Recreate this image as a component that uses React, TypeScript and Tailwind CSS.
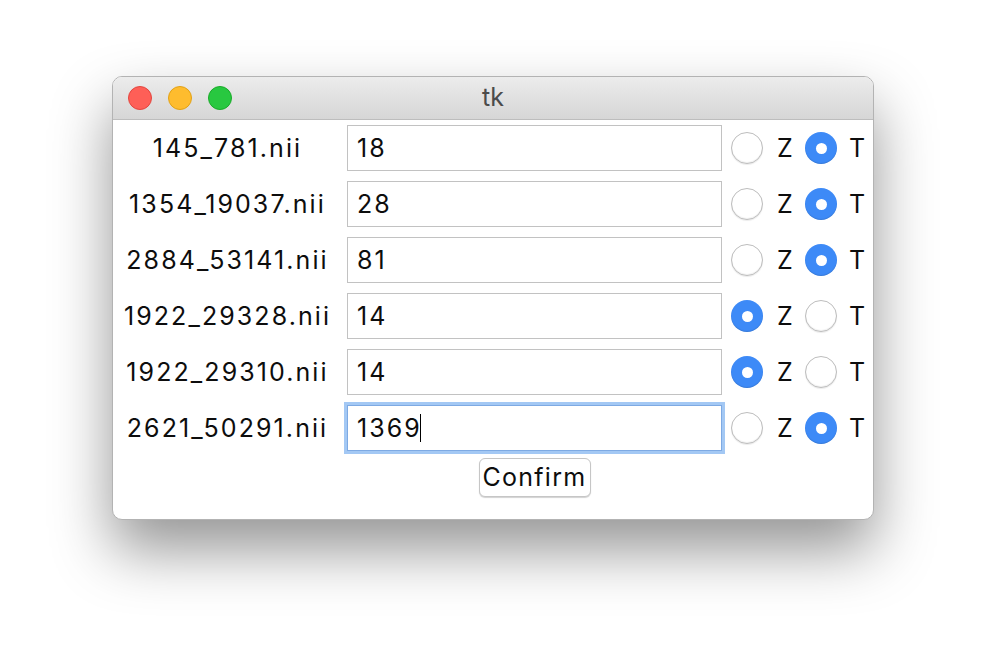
import React from "react";

type Row = { name: string; value: string; mode: "Z" | "T"; focused?: boolean };

const rows: Row[] = [
  { name: "145_781.nii", value: "18", mode: "T" },
  { name: "1354_19037.nii", value: "28", mode: "T" },
  { name: "2884_53141.nii", value: "81", mode: "T" },
  { name: "1922_29328.nii", value: "14", mode: "Z" },
  { name: "1922_29310.nii", value: "14", mode: "Z" },
  { name: "2621_50291.nii", value: "1369", mode: "T", focused: true },
];

function Radio({ checked }: { checked: boolean }) {
  if (checked) {
    return (
      <div className="w-[32px] h-[32px] rounded-full bg-[#3d8af7] flex items-center justify-center shadow-[inset_0_-1px_1px_rgba(0,0,0,0.12)]">
        <div className="w-[11px] h-[11px] rounded-full bg-white" />
      </div>
    );
  }
  return (
    <div className="w-[32px] h-[32px] rounded-full bg-white border border-[#bdbdbd] shadow-[inset_0_-1px_1px_rgba(0,0,0,0.06),0_1px_1px_rgba(0,0,0,0.08)]" />
  );
}

export default function App() {
  return (
    <div className="w-[986px] h-[668px] bg-white pt-[76px] pl-[112px] font-['Inter',sans-serif] text-[#0d0d0d]">
      <div className="w-[762px] h-[444px] rounded-[10px] border border-[#b3b3b3] bg-white overflow-hidden flex flex-col shadow-[0_30px_60px_rgba(0,0,0,0.42)]">
        <div className="h-[43px] shrink-0 relative bg-gradient-to-b from-[#ececec] to-[#d6d6d6] border-b border-[#bdbdbd] flex items-center justify-center">
          <div className="absolute left-[15px] top-[9px] flex gap-[16px]">
            <div className="w-[24px] h-[24px] rounded-full bg-[#fe5f57] border border-[#e2463f]" />
            <div className="w-[24px] h-[24px] rounded-full bg-[#febc2e] border border-[#e1a116]" />
            <div className="w-[24px] h-[24px] rounded-full bg-[#28c840] border border-[#1aab29]" />
          </div>
          <span className="text-[25px] text-[#4b4b4b] leading-none -mt-[1px]">tk</span>
        </div>
        <div className="flex flex-col pt-[5px] gap-[10px] tracking-[0.13em]">
          {rows.map((r) => (
            <div key={r.name} className="flex items-center h-[46px]">
              <div className="w-[226px] pl-[3px] text-center text-[25px] leading-none">{r.name}</div>
              <div
                className={
                  r.focused
                    ? "ml-[8px] w-[375px] h-[46px] border border-[#7eaae3] ring-[3px] ring-[#a3c8f4] bg-white flex items-center pl-[9px] text-[25px] leading-none"
                    : "ml-[8px] w-[375px] h-[46px] border border-[#c2c2c2] bg-white flex items-center pl-[9px] text-[25px] leading-none"
                }
              >
                <span>{r.value}</span>
                {r.focused && <span className="w-[1.5px] h-[28px] bg-black -ml-[2px]" />}
              </div>
              <div className="ml-[9px]">
                <Radio checked={r.mode === "Z"} />
              </div>
              <div className="w-[42px] pl-[14px] text-[25px] leading-none">Z</div>
              <Radio checked={r.mode === "T"} />
              <div className="pl-[12px] text-[25px] leading-none">T</div>
            </div>
          ))}
        </div>
        <div className="flex mt-[7px]">
          <div className="ml-[234px] w-[375px] flex justify-center">
            <div className="w-[112px] h-[39px] rounded-[6px] border border-[#c6c6c6] bg-white shadow-[0_1px_1px_rgba(0,0,0,0.18)] flex items-center justify-center text-[25px] leading-none tracking-[0.05em]">
              Confirm
            </div>
          </div>
        </div>
      </div>
    </div>
  );
}
